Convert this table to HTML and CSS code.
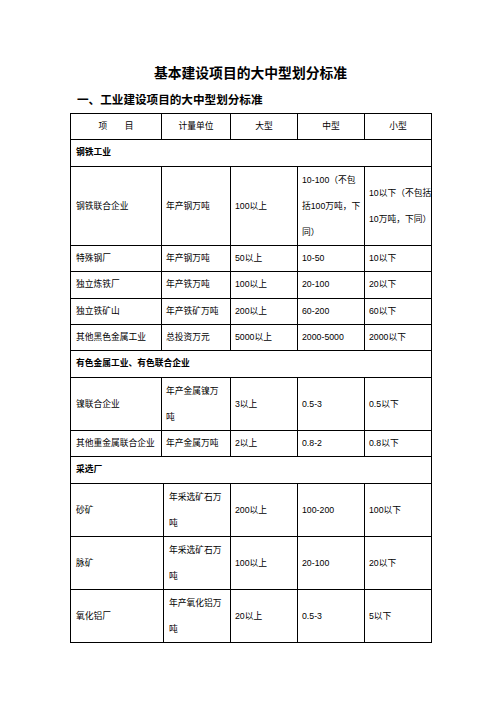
FILE: index.html
```html
<!DOCTYPE html>
<html lang="zh-CN">
<head>
<meta charset="utf-8">
<title>基本建设项目的大中型划分标准</title>
<link rel="stylesheet" href="styles.css">
</head>
<body>
<div class="page">
  <h1 class="title">基本建设项目的大中型划分标准</h1>
  <h2 class="heading">一、工业建设项目的大中型划分标准</h2>
  <table class="grid">
    <colgroup><col class="c1"><col class="c2"><col class="c3"><col class="c3"><col class="c3"></colgroup>
    <tr class="s head"><td>项&emsp;&emsp;目</td><td>计量单位</td><td>大型</td><td>中型</td><td>小型</td></tr>
    <tr class="s"><td colspan="5" class="group">钢铁工业</td></tr>
    <tr><td>钢铁联合企业</td><td>年产钢万吨</td><td>100以上</td><td>10-100（不包<br>括100万吨，下<br>同）</td><td>10以下（不包括<br>10万吨，下同）</td></tr>
    <tr class="s"><td>特殊钢厂</td><td>年产钢万吨</td><td>50以上</td><td>10-50</td><td>10以下</td></tr>
    <tr class="s"><td>独立炼铁厂</td><td>年产铁万吨</td><td>100以上</td><td>20-100</td><td>20以下</td></tr>
    <tr class="s"><td>独立铁矿山</td><td>年产铁矿万吨</td><td>200以上</td><td>60-200</td><td>60以下</td></tr>
    <tr class="s"><td>其他黑色金属工业</td><td>总投资万元</td><td>5000以上</td><td>2000-5000</td><td>2000以下</td></tr>
    <tr class="s"><td colspan="5" class="group">有色金属工业、有色联合企业</td></tr>
    <tr><td>镍联合企业</td><td>年产金属镍万<br>吨</td><td>3以上</td><td>0.5-3</td><td>0.5以下</td></tr>
    <tr class="s"><td>其他重金属联合企业</td><td>年产金属万吨</td><td>2以上</td><td>0.8-2</td><td>0.8以下</td></tr>
    <tr class="s"><td colspan="5" class="group">采选厂</td></tr>
  </table>
  <table class="grid t2">
    <colgroup><col class="c1b"><col class="c2b"><col class="c3"><col class="c3"><col class="c3"></colgroup>
    <tr><td>砂矿</td><td>年采选矿石万<br>吨</td><td>200以上</td><td>100-200</td><td>100以下</td></tr>
    <tr><td>脉矿</td><td>年采选矿石万<br>吨</td><td>100以上</td><td>20-100</td><td>20以下</td></tr>
    <tr><td>氧化铝厂</td><td>年产氧化铝万<br>吨</td><td>20以上</td><td>0.5-3</td><td>5以下</td></tr>
  </table>
</div>
</body>
</html>
```

FILE: styles.css
```css
html, body {
  margin: 0;
  background: #fff;
}

body {
  color: #000;
  font-family: "Liberation Sans", "Noto Sans CJK SC", sans-serif;
}

.page {
  width: 361px;
  padding: 65px 0 0 70px;
}

.title {
  margin: 0;
  font-size: 13.8px;
  line-height: 18px;
  font-weight: bold;
  text-align: center;
}

.heading {
  margin: 9px 0 5px;
  padding-left: 7px;
  font-size: 11.6px;
  line-height: 16px;
  font-weight: bold;
}

.grid {
  border-collapse: collapse;
  table-layout: fixed;
  width: 361px;
  font-size: 8.75px;
}

.c1 { width: 91px; }
.c2 { width: 69px; }
.c3 { width: 67px; }
.c1b { width: 93px; }
.c2b { width: 67px; }

.grid td {
  border: 1px solid #000;
  padding: 0 4px;
  line-height: 26px;
  vertical-align: middle;
  white-space: nowrap;
}

.grid td:first-child {
  padding-left: 5px;
}

.s td {
  line-height: 25.4px;
}

.head td,
.head td:first-child {
  padding: 0;
  text-align: center;
}

.grid td.group {
  font-weight: bold;
}

.t2 tr:first-child td {
  border-top: none;
}

.t2 td:nth-child(2) {
  padding-left: 5px;
}
```
